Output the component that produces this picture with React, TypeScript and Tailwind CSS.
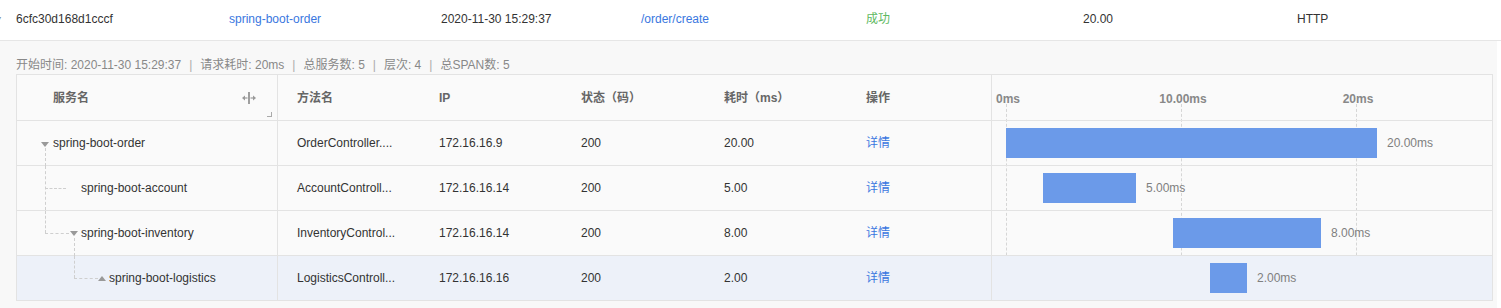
import React from "react";

const font = { fontFamily: '"Liberation Sans", "Noto Sans CJK SC", sans-serif' };

type Row = {
  name: string;
  method: string;
  ip: string;
  status: string;
  cost: string;
  start: number;
  dur: number;
  label: string;
  level: number;
  highlight?: boolean;
};

const rows: Row[] = [
  { name: "spring-boot-order", method: "OrderController....", ip: "172.16.16.9", status: "200", cost: "20.00", start: 0, dur: 20, label: "20.00ms", level: 0 },
  { name: "spring-boot-account", method: "AccountControll...", ip: "172.16.16.14", status: "200", cost: "5.00", start: 2, dur: 5, label: "5.00ms", level: 1 },
  { name: "spring-boot-inventory", method: "InventoryControl...", ip: "172.16.16.14", status: "200", cost: "8.00", start: 9, dur: 8, label: "8.00ms", level: 2 },
  { name: "spring-boot-logistics", method: "LogisticsControll...", ip: "172.16.16.16", status: "200", cost: "2.00", start: 11, dur: 2, label: "2.00ms", level: 3, highlight: true },
];

const PX_PER_MS = 18.55;
const grid = [
  { x: 14, t: "0ms" },
  { x: 189, t: "10.00ms" },
  { x: 364, t: "20ms" },
];

function CaretDown() {
  return (
    <svg width="8" height="5" viewBox="0 0 8 5" className="absolute">
      <path d="M0 0 H8 L4 5 Z" fill="#999" />
    </svg>
  );
}

function TreeCell({ row, idx }: { row: Row; idx: number }) {
  const dash = "absolute border-dashed border-[#cfcfcf]";
  return (
    <div className="relative h-full w-[261px] shrink-0 border-r border-[#e3e3e3]">
      {idx === 0 && (
        <>
          <div className="absolute left-[24px] top-[21px]"><CaretDown /></div>
          <div className={`${dash} left-[28px] top-[27px] h-[18px] border-l`} />
          <span className="absolute left-[36px] top-0 flex h-full items-center">{row.name}</span>
        </>
      )}
      {idx === 1 && (
        <>
          <div className={`${dash} left-[28px] top-0 h-full border-l`} />
          <div className={`${dash} left-[28px] top-[22px] w-[21px] border-t`} />
          <span className="absolute left-[64px] top-0 flex h-full items-center">{row.name}</span>
        </>
      )}
      {idx === 2 && (
        <>
          <div className={`${dash} left-[28px] top-0 h-[22px] border-l`} />
          <div className={`${dash} left-[28px] top-[22px] w-[24px] border-t`} />
          <div className="absolute left-[53px] top-[20px]"><CaretDown /></div>
          <div className={`${dash} left-[57px] top-[27px] h-[18px] border-l`} />
          <span className="absolute left-[64px] top-0 flex h-full items-center">{row.name}</span>
        </>
      )}
      {idx === 3 && (
        <>
          <div className={`${dash} left-[57px] top-0 h-[22px] border-l`} />
          <div className={`${dash} left-[57px] top-[22px] w-[24px] border-t`} />
          <div className="absolute left-[81px] top-[20px]">
            <svg width="8" height="5" viewBox="0 0 8 5" className="absolute">
              <path d="M0 5 H8 L4 0 Z" fill="#999" />
            </svg>
          </div>
          <span className="absolute left-[92px] top-0 flex h-full items-center">{row.name}</span>
        </>
      )}
    </div>
  );
}

export default function App() {
  return (
    <div className="h-[308px] w-[1501px] bg-white text-[12px] text-[#333]" style={font}>
      {/* top summary row */}
      <div className="relative flex h-[41px] items-center border-b border-[#e6e6e6] bg-white pb-[2px] pl-[16px]">
        <span className="absolute left-[-3px] top-[13px] text-[8px] text-[#888]">▾</span>
        <div className="w-[213px] shrink-0">6cfc30d168d1cccf</div>
        <div className="w-[212px] shrink-0 text-[#3a77e0]">spring-boot-order</div>
        <div className="w-[200px] shrink-0">2020-11-30 15:29:37</div>
        <div className="w-[225px] shrink-0 text-[#3a77e0]">/order/create</div>
        <div className="w-[217px] shrink-0 text-[#5fb962]">成功</div>
        <div className="w-[214px] shrink-0">20.00</div>
        <div className="w-[150px] shrink-0">HTTP</div>
      </div>

      {/* detail panel */}
      <div className="h-[267px] w-[1497px] bg-[#f8f8f8] px-[16px] pt-[16px]">
        <div className="flex h-[16px] items-center gap-[8px] leading-[16px] text-[#888]">
          <span>开始时间: 2020-11-30 15:29:37</span>
          <span className="text-[#aaa]">|</span>
          <span>请求耗时: 20ms</span>
          <span className="text-[#aaa]">|</span>
          <span>总服务数: 5</span>
          <span className="text-[#aaa]">|</span>
          <span>层次: 4</span>
          <span className="text-[#aaa]">|</span>
          <span>总SPAN数: 5</span>
        </div>

        <div className="mt-[1px] flex w-[1477px] border border-[#e3e3e3] bg-[#fafafa]">
          {/* left table */}
          <div className="flex w-[975px] shrink-0 flex-col border-r border-[#e3e3e3]">
            <div className="flex h-[46px] items-center border-b border-[#e3e3e3] font-bold text-[#666]">
              <div className="relative flex h-full w-[261px] shrink-0 items-center border-r border-[#e3e3e3] pl-[36px]">
                服务名
                <span className="absolute left-[224px] top-[16px] flex items-center text-[#888]">
                  <svg width="16" height="14" viewBox="0 0 16 14">
                    <path d="M1 7 L4 4.5 V9.5 Z" fill="#999" />
                    <path d="M4 7 H6.5" stroke="#999" strokeWidth="1.2" />
                    <path d="M8 1 V13" stroke="#888" strokeWidth="1.6" />
                    <path d="M9.5 7 H12" stroke="#999" strokeWidth="1.2" />
                    <path d="M15 7 L12 4.5 V9.5 Z" fill="#999" />
                  </svg>
                </span>
                <span className="absolute bottom-[3px] right-[5px] h-[5px] w-[5px] border-b border-r border-[#aaa]" />
              </div>
              <div className="w-[141px] shrink-0 pl-[19px]">方法名</div>
              <div className="w-[142px] shrink-0 pl-[20px]">IP</div>
              <div className="w-[143px] shrink-0 pl-[20px]">状态（码）</div>
              <div className="w-[142px] shrink-0 pl-[20px]">耗时（ms）</div>
              <div className="flex-1 pl-[20px]">操作</div>
            </div>
            {rows.map((r, i) => (
              <div
                key={i}
                className={`flex items-center ${i < rows.length - 1 ? "h-[45px] border-b border-[#e3e3e3]" : "h-[44px]"} ${r.highlight ? "bg-[#edf1f9]" : ""}`}
              >
                <TreeCell row={r} idx={i} />
                <div className="w-[141px] shrink-0 pl-[19px]">{r.method}</div>
                <div className="w-[142px] shrink-0 pl-[20px]">{r.ip}</div>
                <div className="w-[143px] shrink-0 pl-[20px]">{r.status}</div>
                <div className="w-[142px] shrink-0 pl-[20px]">{r.cost}</div>
                <div className="flex-1 pl-[20px] text-[#3a77e0]">详情</div>
              </div>
            ))}
          </div>

          {/* timeline */}
          <div className="relative flex flex-1 flex-col">
            <div className="pointer-events-none absolute inset-0">
              {grid.map((g) => (
                <div key={g.t} className="absolute top-[29px] bottom-0 border-l border-dashed border-[#d6d6d6]" style={{ left: g.x }} />
              ))}
            </div>
            <div className="relative h-[46px] border-b border-[#e3e3e3] font-bold text-[#888]">
              {grid.map((g) => (
                <span key={g.t} className="absolute top-[15px] -translate-x-1/2" style={{ left: g.x + 2 }}>
                  {g.t}
                </span>
              ))}
            </div>
            {rows.map((r, i) => (
              <div
                key={i}
                className={`relative ${i < rows.length - 1 ? "h-[45px] border-b border-[#e3e3e3]" : "h-[44px]"} ${r.highlight ? "bg-[#edf1f9]" : ""}`}
              >
                <div
                  className="absolute top-[7px] flex h-[30px] items-center"
                  style={{ left: 14 + Math.round(r.start * PX_PER_MS) }}
                >
                  <div className="h-[30px] bg-[#6b9ae9]" style={{ width: Math.round(r.dur * PX_PER_MS) }} />
                  <span className="ml-[10px] text-[#7f7f7f]">{r.label}</span>
                </div>
              </div>
            ))}
          </div>
        </div>
      </div>
    </div>
  );
}
